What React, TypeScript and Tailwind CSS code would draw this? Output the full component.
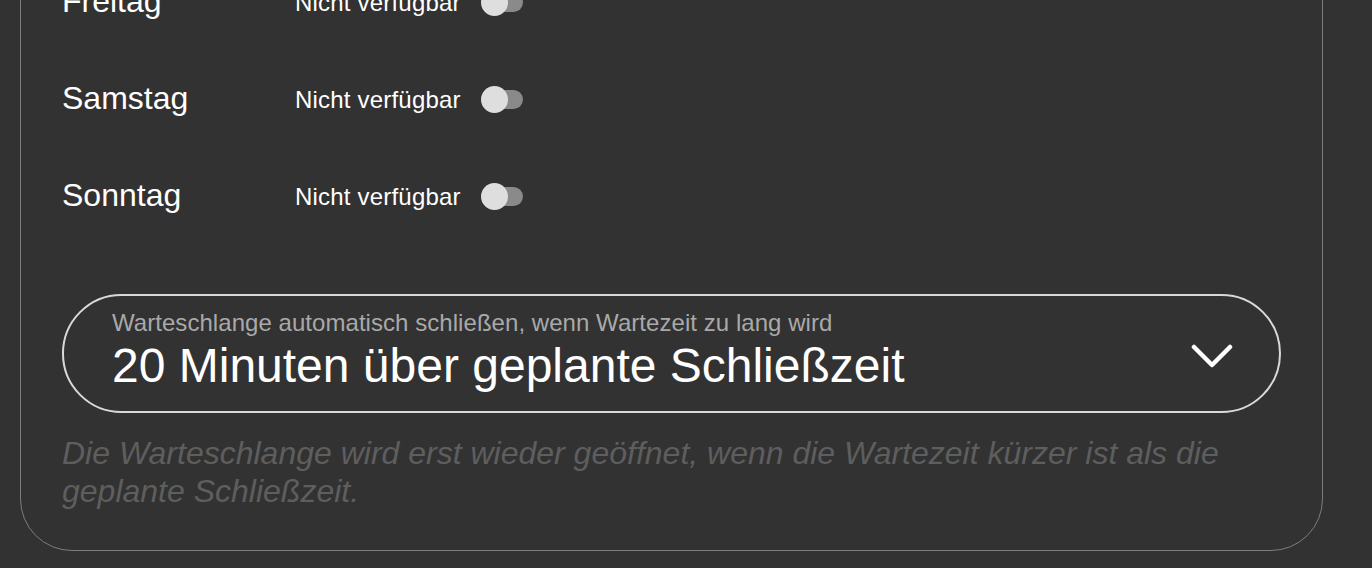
import React from 'react';

const days = ['Montag', 'Dienstag', 'Mittwoch', 'Donnerstag', 'Freitag', 'Samstag', 'Sonntag'];

const Toggle: React.FC = () => (
  <div className="relative w-[42px] h-[27px] flex items-center">
    <div className="ml-[2px] w-[40px] h-[19px] rounded-full bg-[#8a8a8a]" />
    <div className="absolute left-0 top-0 w-[27px] h-[27px] rounded-full bg-[#dedede]" />
  </div>
);

const DayRow: React.FC<{ day: string }> = ({ day }) => (
  <div className="flex items-center h-[97px] shrink-0">
    <span className="w-[233px] text-[32px] text-white leading-none">{day}</span>
    <div className="flex items-center pt-[4px]">
      <span className="text-[24px] text-white leading-none tracking-[0.2px]">Nicht verfügbar</span>
      <div className="ml-[20px]">
        <Toggle />
      </div>
    </div>
  </div>
);

export default function App() {
  return (
    <div
      className="h-[568px] w-[1372px] overflow-hidden bg-[#323232] flex flex-col justify-end"
      style={{ fontFamily: '"Liberation Sans", Arial, sans-serif' }}
    >
      <div className="ml-[20px] mb-[17px] w-[1303px] shrink-0 rounded-[52px] border-[1.5px] border-[#7d7d7d] px-[41px] pb-[40px] flex flex-col">
        {days.map((d) => (
          <DayRow key={d} day={d} />
        ))}
        <div className="mt-[51px] h-[119px] rounded-full border-2 border-[#d9d9d9] pl-[48px] pr-[46px] flex items-center justify-between">
          <div className="flex flex-col mb-[8px]">
            <span className="text-[24px] leading-[28px] text-[#a9a9a9] tracking-[0.05px]">
              Warteschlange automatisch schließen, wenn Wartezeit zu lang wird
            </span>
            <span className="mt-[5px] text-[48px] leading-[48px] text-white">
              20 Minuten über geplante Schließzeit
            </span>
          </div>
          <svg width="42" height="26" viewBox="0 0 42 26" fill="none" className="mt-[6px]">
            <polyline
              points="3,3 21,21 39,3"
              stroke="#ffffff"
              strokeWidth="4.5"
              strokeLinecap="round"
              strokeLinejoin="round"
            />
          </svg>
        </div>
        <p className="mt-[21px] text-[32px] leading-[38px] italic text-[#5e5e5e]">
          Die Warteschlange wird erst wieder geöffnet, wenn die Wartezeit kürzer ist als die geplante Schließzeit.
        </p>
      </div>
    </div>
  );
}
